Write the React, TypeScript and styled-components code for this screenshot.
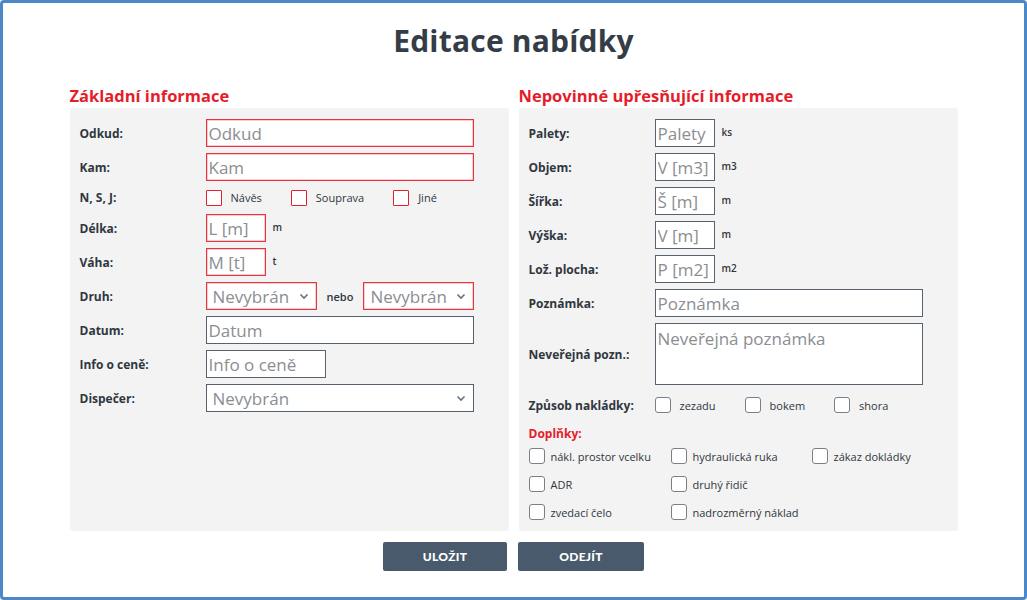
import React from "react";
import styled, { createGlobalStyle, css } from "styled-components";

const Global = createGlobalStyle`
  html, body { margin: 0; padding: 0; background: #ffffff; }
  body { font-family: "Open Sans", "Noto Sans", sans-serif; color: #2f3740; }
  * { box-sizing: border-box; }
`;

const Frame = styled.div`
  width: 1027px;
  height: 600px;
  border: 3px solid #4a88c8;
  border-radius: 4px;
  background: #fff;
  display: flex;
  flex-direction: column;
  align-items: center;
  overflow: hidden;
`;

const Title = styled.h1`
  margin: 20px 0 0;
  font-size: 30px;
  font-weight: 700;
  color: #343d47;
  line-height: 36px;
  letter-spacing: 0.2px;
`;

const Columns = styled.div`
  margin-top: 25px;
  width: 888px;
  display: grid;
  grid-template-columns: 439px 439px;
  column-gap: 10px;
`;

const Section = styled.section`
  display: flex;
  flex-direction: column;
`;

const SectionTitle = styled.h2`
  margin: 0;
  font-size: 16.5px;
  font-weight: 700;
  line-height: 24px;
  color: #e51d2a;
`;

const Panel = styled.div`
  background: #f3f3f3;
  border-radius: 3px;
  padding: 11px 0 0 10px;
  display: flex;
  flex-direction: column;
  gap: 6px;
  height: 423px;
`;

const Row = styled.div<{ $h?: number }>`
  display: flex;
  align-items: center;
  min-height: ${(p) => p.$h ?? 28}px;
`;

const Label = styled.label<{ $w?: number; $red?: boolean }>`
  width: ${(p) => p.$w ?? 126}px;
  flex: none;
  font-size: 12px;
  font-weight: 700;
  color: ${(p) => (p.$red ? "#e51d2a" : "#2f3740")};
`;

const fieldBase = css<{ $red?: boolean; $w: number }>`
  width: ${(p) => p.$w}px;
  height: 28px;
  background: #fff;
  border: 1px solid ${(p) => (p.$red ? "#e8343f" : "#56636f")};
  box-shadow: ${(p) => (p.$red ? "inset 0 0 0 0.5px #f39aa0" : "none")};
  font-family: "Open Sans", "Noto Sans", sans-serif;
  font-size: 17px;
  color: #333;
  outline: none;
  &::placeholder { color: #8b8e92; }
`;

const Input = styled.input<{ $red?: boolean; $w: number }>`
  ${fieldBase};
  padding: 0 2px;
`;

const TextArea = styled.textarea<{ $w: number }>`
  ${fieldBase};
  height: 62px;
  padding: 2px 2px;
  resize: none;
  line-height: 26px;
`;

const SelectWrap = styled.div`
  position: relative;
  display: inline-flex;
`;

const Select = styled.select<{ $red?: boolean; $w: number }>`
  ${fieldBase};
  appearance: none;
  -webkit-appearance: none;
  padding: 0 6px;
  color: #8b8e92;
  border-radius: 0;
`;

const Chevron = styled.svg`
  position: absolute;
  right: 8px;
  top: 10px;
  pointer-events: none;
`;

const Unit = styled.span`
  margin-left: 7px;
  margin-bottom: 2px;
  font-size: 10px;
  font-weight: 600;
  color: #2f3740;
`;

const Nebo = styled.span`
  font-size: 11px;
  font-weight: 600;
  color: #2f3740;
  margin: 0 10px;
`;

const CheckGroup = styled.div<{ $gap: number }>`
  display: flex;
  align-items: center;
  gap: ${(p) => p.$gap}px;
`;

const CheckItem = styled.label<{ $gap?: number }>`
  display: inline-flex;
  align-items: center;
  gap: ${(p) => p.$gap ?? 9}px;
  font-size: 11px;
  font-weight: 500;
  color: #2f3740;
`;

const Box = styled.span<{ $red?: boolean }>`
  width: 16px;
  height: 16px;
  flex: none;
  background: #fff;
  border: ${(p) => (p.$red ? "1.5px solid #e0202b" : "1px solid #7b8086")};
  border-radius: ${(p) => (p.$red ? "1px" : "3px")};
`;

const Extras = styled.div`
  display: flex;
  flex-direction: column;
`;

const ExtrasTitle = styled.div`
  height: 17px;
  display: flex;
  align-items: center;
  font-size: 12px;
  font-weight: 700;
  color: #e51d2a;
`;

const ExtrasGrid = styled.div`
  display: grid;
  grid-template-columns: 142px 141px 120px;
  grid-auto-rows: 28px;
  align-items: center;
`;

const Buttons = styled.div`
  margin-top: 11px;
  display: flex;
  gap: 11px;
`;

const Button = styled.button<{ $w: number }>`
  width: ${(p) => p.$w}px;
  height: 29px;
  background: #485a6b;
  color: #fff;
  border: none;
  border-radius: 2px;
  font-family: "Lato", "Open Sans", sans-serif;
  font-weight: 900;
  font-size: 12px;
  letter-spacing: 0.3px;
`;

const ChevronIcon = () => (
  <Chevron width="10" height="8" viewBox="0 0 10 8">
    <path d="M1.5 2.5 L5 6 L8.5 2.5" fill="none" stroke="#6b7078" strokeWidth="1.6" />
  </Chevron>
);

const SelectBox = ({ w, red }: { w: number; red?: boolean }) => (
  <SelectWrap>
    <Select $w={w} $red={red} defaultValue="">
      <option value="">Nevybrán</option>
    </Select>
    <ChevronIcon />
  </SelectWrap>
);

const Check = ({ label, red, gap }: { label: string; red?: boolean; gap?: number }) => (
  <CheckItem $gap={gap}>
    <Box $red={red} />
    {label}
  </CheckItem>
);

export default function App() {
  return (
    <>
      <Global />
      <Frame>
        <Title>Editace nabídky</Title>
        <Columns>
          <Section>
            <SectionTitle>Základní informace</SectionTitle>
            <Panel>
              <Row>
                <Label>Odkud:</Label>
                <Input $w={268} $red placeholder="Odkud" />
              </Row>
              <Row>
                <Label>Kam:</Label>
                <Input $w={268} $red placeholder="Kam" />
              </Row>
              <Row $h={21}>
                <Label>N, S, J:</Label>
                <CheckGroup $gap={29}>
                  <Check red label="Návěs" />
                  <Check red label="Souprava" />
                  <Check red label="Jiné" />
                </CheckGroup>
              </Row>
              <Row>
                <Label>Délka:</Label>
                <Input $w={60} $red placeholder="L [m]" />
                <Unit>m</Unit>
              </Row>
              <Row>
                <Label>Váha:</Label>
                <Input $w={60} $red placeholder="M [t]" />
                <Unit>t</Unit>
              </Row>
              <Row>
                <Label>Druh:</Label>
                <SelectBox w={111} red />
                <Nebo>nebo</Nebo>
                <SelectBox w={111} red />
              </Row>
              <Row>
                <Label>Datum:</Label>
                <Input $w={268} placeholder="Datum" />
              </Row>
              <Row>
                <Label>Info o ceně:</Label>
                <Input $w={120} placeholder="Info o ceně" />
              </Row>
              <Row>
                <Label>Dispečer:</Label>
                <SelectBox w={268} />
              </Row>
            </Panel>
          </Section>
          <Section>
            <SectionTitle>Nepovinné upřesňující informace</SectionTitle>
            <Panel>
              <Row>
                <Label>Palety:</Label>
                <Input $w={60} placeholder="Palety" />
                <Unit>ks</Unit>
              </Row>
              <Row>
                <Label>Objem:</Label>
                <Input $w={60} placeholder="V [m3]" />
                <Unit>m3</Unit>
              </Row>
              <Row>
                <Label>Šířka:</Label>
                <Input $w={60} placeholder="Š [m]" />
                <Unit>m</Unit>
              </Row>
              <Row>
                <Label>Výška:</Label>
                <Input $w={60} placeholder="V [m]" />
                <Unit>m</Unit>
              </Row>
              <Row>
                <Label>Lož. plocha:</Label>
                <Input $w={60} placeholder="P [m2]" />
                <Unit>m2</Unit>
              </Row>
              <Row>
                <Label>Poznámka:</Label>
                <Input $w={268} placeholder="Poznámka" />
              </Row>
              <Row>
                <Label>Neveřejná pozn.:</Label>
                <TextArea $w={268} placeholder="Neveřejná poznámka" />
              </Row>
              <Row>
                <Label>Způsob nakládky:</Label>
                <CheckGroup $gap={29}>
                  <Check label="zezadu" />
                  <Check label="bokem" />
                  <Check label="shora" />
                </CheckGroup>
              </Row>
              <Extras>
                <ExtrasTitle>Doplňky:</ExtrasTitle>
                <ExtrasGrid>
                  <Check gap={6} label="nákl. prostor vcelku" />
                  <Check gap={6} label="hydraulická ruka" />
                  <Check gap={6} label="zákaz dokládky" />
                  <Check gap={6} label="ADR" />
                  <Check gap={6} label="druhý řidič" />
                  <span />
                  <Check gap={6} label="zvedací čelo" />
                  <Check gap={6} label="nadrozměrný náklad" />
                </ExtrasGrid>
              </Extras>
            </Panel>
          </Section>
        </Columns>
        <Buttons>
          <Button $w={124}>ULOŽIT</Button>
          <Button $w={126}>ODEJÍT</Button>
        </Buttons>
      </Frame>
    </>
  );
}
